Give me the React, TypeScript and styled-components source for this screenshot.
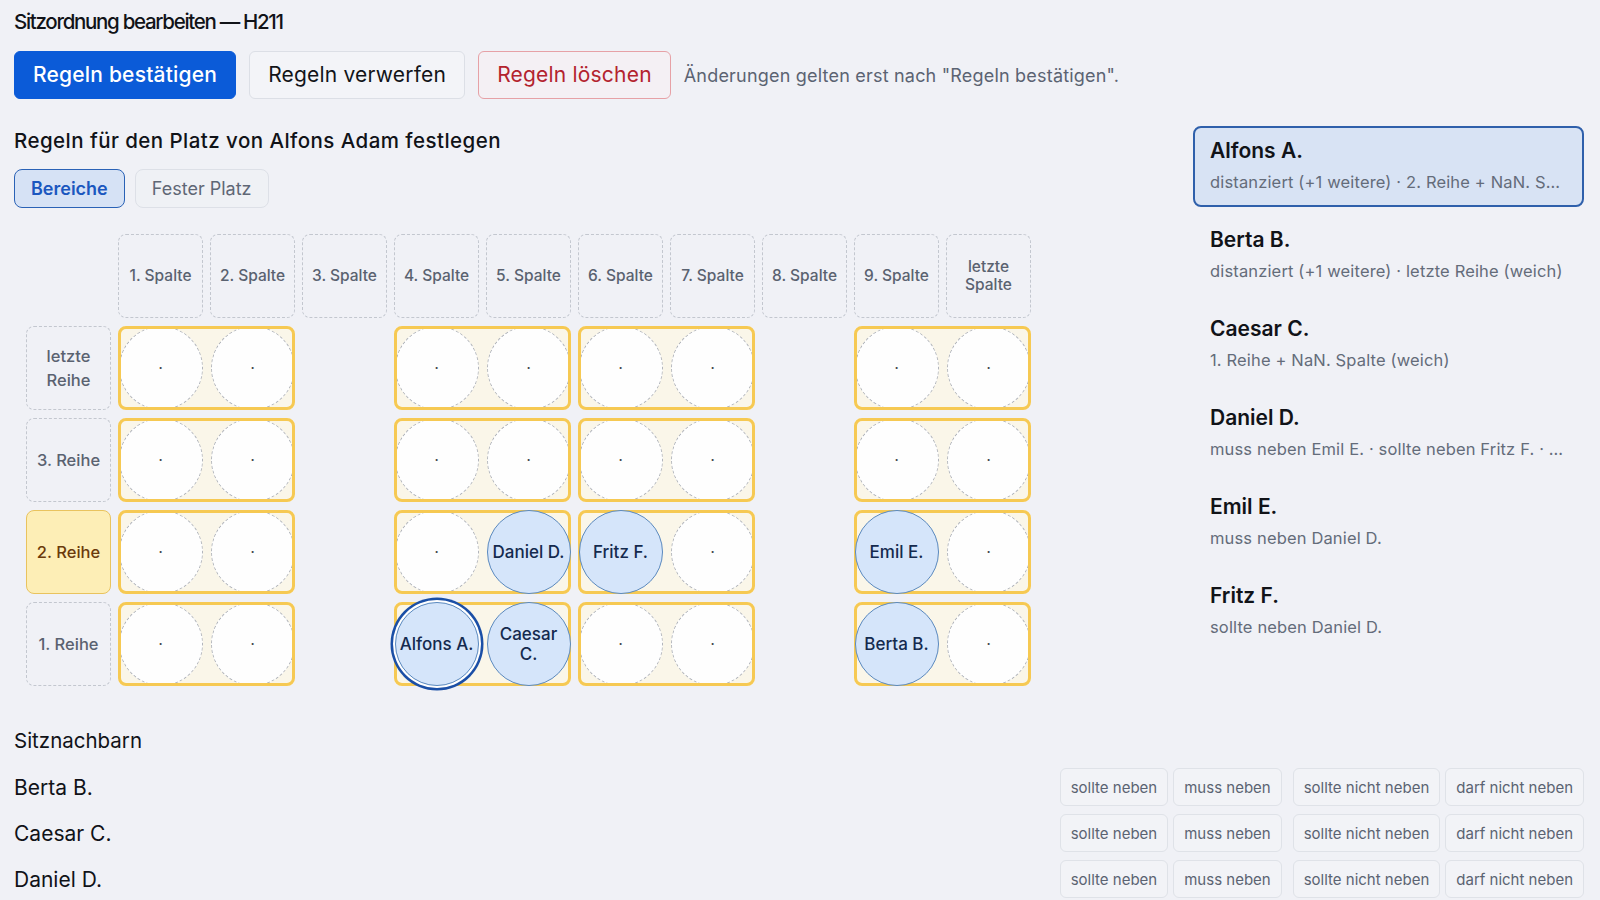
import React from 'react';
import styled, { createGlobalStyle, css } from 'styled-components';

const GlobalStyle = createGlobalStyle`
  html, body {
    margin: 0;
    padding: 0;
    background: #f0f1f6;
  }
  body {
    font-family: Inter, "Noto Sans", "Liberation Sans", sans-serif;
    color: #111318;
  }
  * { box-sizing: border-box; }
`;

const Page = styled.div`
  display: flex;
  flex-direction: column;
  padding: 8px 16px 24px 14px;
`;

const Title = styled.h1`
  margin: 0;
  font-size: 20.5px;
  line-height: 28px;
  font-weight: 500;
  letter-spacing: -1.3px;
`;

const Toolbar = styled.div`
  display: flex;
  align-items: center;
  gap: 13px;
  margin-top: 15px;
`;

type Variant = 'primary' | 'neutral' | 'danger';

const ActionButton = styled.button<{ $variant: Variant }>`
  height: 48px;
  padding: 0 18px;
  border-radius: 6px;
  font-family: inherit;
  font-size: 21px;
  line-height: 28px;
  letter-spacing: 0.2px;
  cursor: pointer;
  ${({ $variant }) =>
    $variant === 'primary'
      ? css`
          background: #0b5bd8;
          border: 1px solid #0b5bd8;
          color: #ffffff;
          font-weight: 500;
        `
      : $variant === 'danger'
      ? css`
          background: #f4f0f4;
          border: 1px solid #e6a1a6;
          color: #b3232e;
          font-weight: 400;
        `
      : css`
          background: #f3f4f8;
          border: 1px solid #dcdfe6;
          color: #121419;
          font-weight: 400;
        `}
`;

const Hint = styled.span`
  font-size: 18px;
  letter-spacing: 0.2px;
  color: #5b6372;
`;

const Workspace = styled.div`
  display: grid;
  grid-template-columns: 1fr 391px;
  align-items: start;
  margin-top: 27px;
`;

const EditorColumn = styled.section`
  display: flex;
  flex-direction: column;
`;

const SectionTitle = styled.h2`
  margin: 0;
  font-size: 20.5px;
  line-height: 30px;
  font-weight: 500;
  letter-spacing: 0.45px;
`;

const TabRow = styled.div`
  display: flex;
  gap: 10px;
  margin-top: 13px;
`;

const Tab = styled.button<{ $active?: boolean }>`
  height: 39px;
  padding: 0 16px;
  border-radius: 8px;
  font-family: inherit;
  font-size: 18px;
  cursor: pointer;
  ${({ $active }) =>
    $active
      ? css`
          background: #d6e2f5;
          border: 1.5px solid #2a62b6;
          color: #1b57bf;
          font-weight: 600;
        `
      : css`
          background: #eff1f5;
          border: 1px solid #dde0e7;
          color: #5f6775;
          font-weight: 400;
        `}
`;

const Board = styled.div`
  display: grid;
  grid-template-columns: repeat(11, 85px);
  grid-auto-rows: 84px;
  column-gap: 7px;
  row-gap: 8px;
  padding: 12px;
  margin-top: 14px;
`;

const HeaderCell = styled.div<{ $row?: boolean; $highlight?: boolean }>`
  display: flex;
  align-items: center;
  justify-content: center;
  text-align: center;
  padding: 0 6px;
  border-radius: 8px;
  font-weight: 500;
  font-size: ${({ $row }) => ($row ? '16.5px' : '15.5px')};
  line-height: ${({ $row }) => ($row ? '24px' : '18px')};
  ${({ $highlight }) =>
    $highlight
      ? css`
          background: #fdeeb6;
          border: 1px solid #e9c35e;
          color: #6b3a0b;
        `
      : css`
          border: 1px dashed #c3c7cf;
          color: #5a6270;
        `}
`;

const Desk = styled.div<{ $col: number; $row: number }>`
  grid-column: ${({ $col }) => `${$col} / span 2`};
  grid-row: ${({ $row }) => $row};
  position: relative;
  display: grid;
  grid-template-columns: 1fr 1fr;
  column-gap: 7px;
  justify-items: center;
  align-items: center;
  border-radius: 8px;
  background: #faf6e9;

  &::after {
    content: '';
    position: absolute;
    inset: 0;
    border: 3px solid #f6c953;
    border-radius: 8px;
    pointer-events: none;
  }
`;

const Seat = styled.div<{ $taken?: boolean; $selected?: boolean }>`
  width: 84px;
  height: 84px;
  border-radius: 50%;
  display: flex;
  align-items: center;
  justify-content: center;
  text-align: center;
  padding: 0 4px;
  font-size: 17px;
  line-height: 20px;
  font-weight: 500;
  ${({ $taken }) =>
    $taken
      ? css`
          position: relative;
          z-index: 1;
          background: #d5e5fa;
          border: 1px solid #5a89bf;
          color: #142a4e;
        `
      : css`
          background: #fefefe;
          border: 1px dashed #aeb2ba;
          color: #3d424b;
        `}
  ${({ $selected }) =>
    $selected &&
    css`
      z-index: 2;
      box-shadow: 0 0 0 2px #ffffff, 0 0 0 4.5px #1b4fa6;
    `}
`;

const EmptyDot = styled.span`
  font-size: 14px;
  line-height: 14px;
`;

const PeopleList = styled.aside`
  display: flex;
  flex-direction: column;
  gap: 8px;
`;

const PersonCard = styled.div<{ $selected?: boolean }>`
  display: flex;
  flex-direction: column;
  gap: 5px;
  padding: 9px 15px 11px;
  border-radius: 8px;
  border: 2px solid ${({ $selected }) => ($selected ? '#2f60ab' : 'transparent')};
  background: ${({ $selected }) => ($selected ? '#d8e3f4' : 'transparent')};
`;

const PersonName = styled.div`
  font-size: 21px;
  line-height: 28px;
  font-weight: 600;
  color: #111318;
`;

const PersonRules = styled.div`
  font-size: 16.5px;
  line-height: 24px;
  letter-spacing: 0.15px;
  color: #646c7a;
  white-space: nowrap;
  overflow: hidden;
  text-overflow: ellipsis;
`;

const NeighbourSection = styled.section`
  display: flex;
  flex-direction: column;
  margin-top: 29px;
`;

const NeighbourTitle = styled.h3`
  margin: 0 0 13px;
  font-size: 20.5px;
  line-height: 28px;
  font-weight: 400;
`;

const NeighbourRows = styled.div`
  display: flex;
  flex-direction: column;
  gap: 8px;
`;

const NeighbourRow = styled.div`
  display: flex;
  align-items: center;
  justify-content: space-between;
  height: 38px;
`;

const NeighbourName = styled.span`
  font-size: 21px;
  color: #111318;
`;

const ChoiceBar = styled.div`
  display: flex;
  gap: 11px;
`;

const ChoiceGroup = styled.div`
  display: flex;
  gap: 5px;
`;

const ChoiceButton = styled.button`
  height: 38px;
  padding: 0 10px;
  border-radius: 6px;
  border: 1px solid #dfe2e8;
  background: #f2f3f7;
  color: #5b6372;
  font-family: inherit;
  font-size: 15px;
  cursor: pointer;
`;

const columns = [
  '1. Spalte',
  '2. Spalte',
  '3. Spalte',
  '4. Spalte',
  '5. Spalte',
  '6. Spalte',
  '7. Spalte',
  '8. Spalte',
  '9. Spalte',
  'letzte Spalte',
];

const rows = ['letzte Reihe', '3. Reihe', '2. Reihe', '1. Reihe'];
const deskStarts = [1, 4, 6, 9];

const occupants: Record<string, { name: string; selected?: boolean }> = {
  '2-5': { name: 'Daniel D.' },
  '2-6': { name: 'Fritz F.' },
  '2-9': { name: 'Emil E.' },
  '3-4': { name: 'Alfons A.', selected: true },
  '3-5': { name: 'Caesar C.' },
  '3-9': { name: 'Berta B.' },
};

const people = [
  { name: 'Alfons A.', rules: 'distanziert (+1 weitere) · 2. Reihe + NaN. Spalte (weich)', selected: true },
  { name: 'Berta B.', rules: 'distanziert (+1 weitere) · letzte Reihe (weich)' },
  { name: 'Caesar C.', rules: '1. Reihe + NaN. Spalte (weich)' },
  { name: 'Daniel D.', rules: 'muss neben Emil E. · sollte neben Fritz F. · …' },
  { name: 'Emil E.', rules: 'muss neben Daniel D.' },
  { name: 'Fritz F.', rules: 'sollte neben Daniel D.' },
];

const neighbours = ['Berta B.', 'Caesar C.', 'Daniel D.', 'Emil E.', 'Fritz F.'];

function SeatView({ row, col }: { row: number; col: number }) {
  const person = occupants[`${row}-${col}`];
  if (!person) {
    return (
      <Seat>
        <EmptyDot>·</EmptyDot>
      </Seat>
    );
  }
  return (
    <Seat $taken $selected={person.selected}>
      {person.name}
    </Seat>
  );
}

export default function App() {
  return (
    <>
      <GlobalStyle />
      <Page>
        <Title>Sitzordnung bearbeiten — H211</Title>
        <Toolbar>
          <ActionButton $variant="primary">Regeln bestätigen</ActionButton>
          <ActionButton $variant="neutral">Regeln verwerfen</ActionButton>
          <ActionButton $variant="danger">Regeln löschen</ActionButton>
          <Hint>Änderungen gelten erst nach "Regeln bestätigen".</Hint>
        </Toolbar>

        <Workspace>
          <EditorColumn>
            <SectionTitle>Regeln für den Platz von Alfons Adam festlegen</SectionTitle>
            <TabRow>
              <Tab $active>Bereiche</Tab>
              <Tab>Fester Platz</Tab>
            </TabRow>
            <Board>
              <div />
              {columns.map((c) => (
                <HeaderCell key={c}>{c}</HeaderCell>
              ))}
              {rows.map((r, ri) => (
                <React.Fragment key={r}>
                  <HeaderCell $row $highlight={r === '2. Reihe'} style={{ gridColumn: 1, gridRow: ri + 2 }}>
                    {r}
                  </HeaderCell>
                  {deskStarts.map((start) => (
                    <Desk key={start} $col={start + 1} $row={ri + 2}>
                      <SeatView row={ri} col={start} />
                      <SeatView row={ri} col={start + 1} />
                    </Desk>
                  ))}
                </React.Fragment>
              ))}
            </Board>
          </EditorColumn>

          <PeopleList>
            {people.map((p) => (
              <PersonCard key={p.name} $selected={p.selected}>
                <PersonName>{p.name}</PersonName>
                <PersonRules>{p.rules}</PersonRules>
              </PersonCard>
            ))}
          </PeopleList>
        </Workspace>

        <NeighbourSection>
          <NeighbourTitle>Sitznachbarn</NeighbourTitle>
          <NeighbourRows>
            {neighbours.map((n) => (
              <NeighbourRow key={n}>
                <NeighbourName>{n}</NeighbourName>
                <ChoiceBar>
                  <ChoiceGroup>
                    <ChoiceButton>sollte neben</ChoiceButton>
                    <ChoiceButton>muss neben</ChoiceButton>
                  </ChoiceGroup>
                  <ChoiceGroup>
                    <ChoiceButton>sollte nicht neben</ChoiceButton>
                    <ChoiceButton>darf nicht neben</ChoiceButton>
                  </ChoiceGroup>
                </ChoiceBar>
              </NeighbourRow>
            ))}
          </NeighbourRows>
        </NeighbourSection>
      </Page>
    </>
  );
}
